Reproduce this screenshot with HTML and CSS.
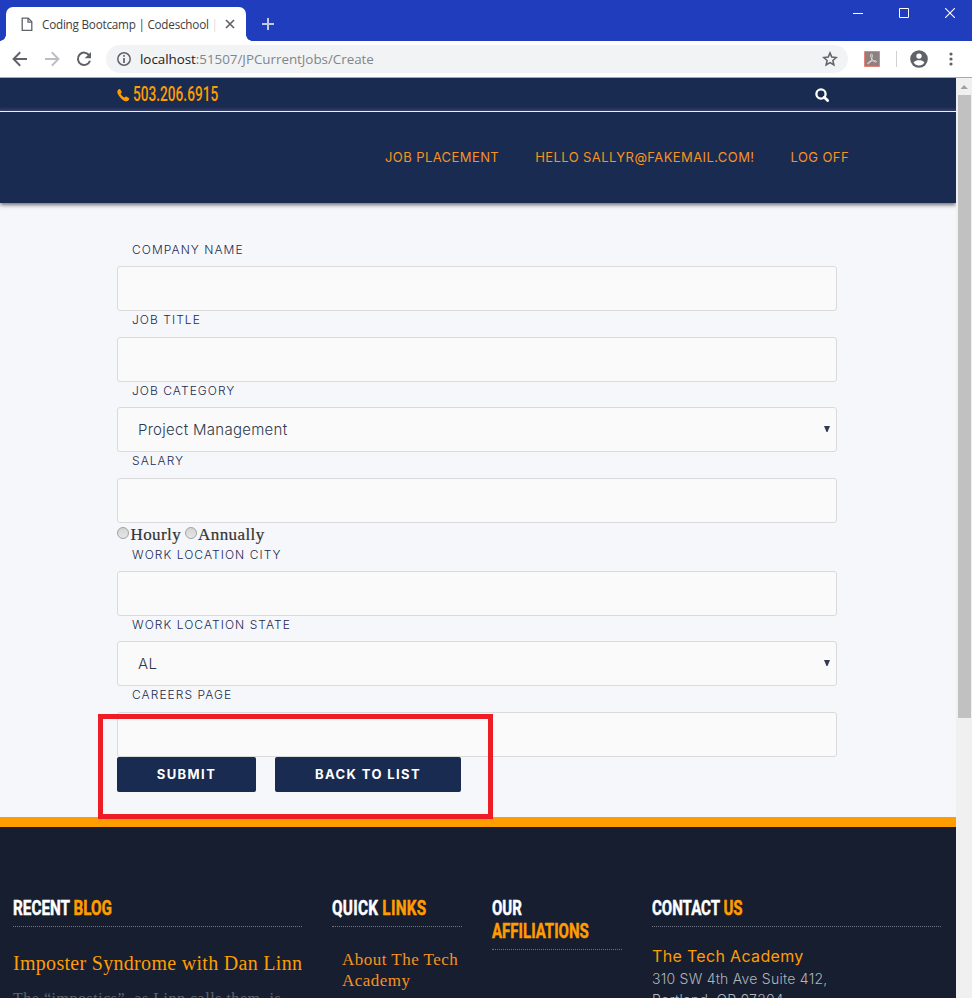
FILE: index.html
```
<!DOCTYPE html>
<html lang="en">
<head>
<meta charset="utf-8">
<title>Coding Bootcamp | Codeschool</title>
<link rel="stylesheet" href="styles.css">
</head>
<body>
<div class="window">
  <div class="titlebar">
    <div class="tab">
      <svg class="tab-file" width="12" height="15" viewBox="0 0 12 15" fill="none" stroke="#5f6368" stroke-width="1.3"><path d="M1.2 1.2h6l3.6 3.6v8.6H1.2z"/><path d="M7 1.2v3.9h3.8"/></svg>
      <span class="tab-title">Coding Bootcamp | Codeschool <i>|</i></span>
      <svg width="10" height="10" viewBox="0 0 10 10" stroke="#5f6368" stroke-width="1.7"><path d="M1 1l8 8M9 1L1 9"/></svg>
    </div>
    <svg class="newtab" width="12" height="12" viewBox="0 0 12 12" stroke="#c3c8da" stroke-width="2"><path d="M6 0v12M0 6h12"/></svg>
    <div class="controls">
      <svg width="10" height="10" viewBox="0 0 10 10" stroke="#fff"><path d="M0 5.5h10"/></svg>
      <svg width="10" height="10" viewBox="0 0 10 10" fill="none" stroke="#fff"><path d="M.5.5h9v9h-9z"/></svg>
      <svg width="10" height="10" viewBox="0 0 10 10" stroke="#fff" stroke-width="1.1"><path d="M0 0l10 10M10 0L0 10"/></svg>
    </div>
  </div>

  <div class="toolbar">
    <svg width="16" height="16" viewBox="0 0 16 16" fill="none" stroke="#5f6368" stroke-width="2"><path d="M8.2 1.3L1.6 8l6.6 6.7M1.8 8H15"/></svg>
    <svg width="16" height="16" viewBox="0 0 16 16" fill="none" stroke="#bcbec1" stroke-width="2"><path d="M7.8 1.3L14.4 8l-6.6 6.7M14.2 8H1"/></svg>
    <svg width="16" height="16" viewBox="0 0 16 16"><path d="M13.3 4.4A6.2 6.2 0 1 0 14 9.8" fill="none" stroke="#5f6368" stroke-width="2"/><path d="M15 .9v6.3H8.7z" fill="#5f6368"/></svg>
    <div class="address">
      <svg width="14" height="14" viewBox="0 0 14 14"><circle cx="7" cy="7" r="6.2" fill="none" stroke="#5f6368" stroke-width="1.5"/><path d="M7 3.1v1.6M7 6v4.9" stroke="#5f6368" stroke-width="1.7"/></svg>
      <span class="url"><b>localhost</b>:51507/JPCurrentJobs/Create</span>
      <svg width="16" height="16" viewBox="0 0 16 16" fill="none" stroke="#5f6368" stroke-width="1.5"><path d="M8 1.9l1.75 4.2 4.55.4-3.45 3 1.05 4.45L8 11.6l-3.9 2.35L5.15 9.5 1.7 6.5l4.55-.4z"/></svg>
    </div>
    <svg width="16" height="16" viewBox="0 0 16 16"><path d="M.5.5h15v15H.5z" fill="#8c8180" stroke="#e98272"/><path d="M7.2 3c1.2-.6 1.3 1.6.9 3.6-.5 2.4-2.2 5.600-3.500 6.200-1.100.4-1.400-.6-.3-1.400 1.800-1.400 6.300-2.200 7.700-1.400 1 .7-.1 1.600-1.400.8C8.800 9.700 7 7.100 6.700 5 6.600 4 6.600 3.300 7.200 3z" fill="none" stroke="#e4dad8"/></svg>
    <span class="divider"></span>
    <svg class="profile" width="18" height="18" viewBox="0 0 18 18"><circle cx="9" cy="9" r="8.800" fill="#5f6368"/><circle cx="9" cy="6.100" r="2.700" fill="#fff"/><path d="M3.600 12.600C4.500 10.800 7 10.300 9 10.300s4.500.5 5.400 2.300C13.300 14.400 11.300 15.500 9 15.500s-4.300-1.100-5.400-2.900z" fill="#fff"/></svg>
    <svg class="menu" width="4" height="14" viewBox="0 0 4 14" fill="#5f6368"><circle cx="2" cy="2" r="1.600"/><circle cx="2" cy="7" r="1.600"/><circle cx="2" cy="12" r="1.600"/></svg>
  </div>

  <div class="viewport">
    <div class="page">
      <div class="topbar">
        <div class="phone">
          <svg width="13" height="13" viewBox="0 0 13 13"><path d="M1 .9C1.900 0 2.900-.1 3.300.5l1.300 2.300c.3.600 0 1.100-.9 1.800-.3.400.4 1.400 1.500 2.500s2 1.700 2.400 1.400c.8-.9 1.300-1.200 1.800-.9l2.400 1.400c.7.500.5 1.500-.4 2.400-1.400 1.400-4 1.100-7.300-2C.6 6-.6 2.600 1 .9z" fill="#ff9d00"/></svg>
          <span>503.206.6915</span>
        </div>
        <svg width="14" height="14" viewBox="0 0 14 14" fill="none" stroke="#fff"><circle cx="6" cy="6" r="4.600" stroke-width="2.300"/><path d="M9.300 9.300l3.300 3.300" stroke-width="2.800" stroke-linecap="round"/></svg>
      </div>
      <nav class="nav"><a>JOB PLACEMENT</a><a>HELLO SALLYR@FAKEMAIL.COM!</a><a>LOG OFF</a></nav>

      <main class="form">
        <label>COMPANY NAME</label>
        <div class="field"></div>
        <label>JOB TITLE</label>
        <div class="field"></div>
        <label>JOB CATEGORY</label>
        <div class="field">Project Management<svg width="6" height="6" viewBox="0 0 6 6"><path d="M0 0h6L3.500 6h-1z" fill="#343a52"/></svg></div>
        <label>SALARY</label>
        <div class="field"></div>
        <div class="radios"><i></i><span>Hourly</span><i></i><span>Annually</span></div>
        <label class="after-radios">WORK LOCATION CITY</label>
        <div class="field"></div>
        <label>WORK LOCATION STATE</label>
        <div class="field">AL<svg width="6" height="6" viewBox="0 0 6 6"><path d="M0 0h6L3.500 6h-1z" fill="#343a52"/></svg></div>
        <label>CAREERS PAGE</label>
        <div class="field"></div>
        <div class="buttons"><button class="submit">SUBMIT</button><button class="back">BACK TO LIST</button></div>
      </main>

      <footer class="footer">
        <section>
          <h3><span>RECENT <em>BLOG</em></span></h3>
          <p class="post">Imposter Syndrome with Dan Linn</p>
          <p class="excerpt">The “impostics”, as Linn calls them, is</p>
        </section>
        <section>
          <h3 class="quick"><span>QUICK <em>LINKS</em></span></h3>
          <p class="link">About The Tech<br>Academy</p>
        </section>
        <section>
          <h3 class="narrow"><span>OUR<br><em>AFFILIATIONS</em></span></h3>
        </section>
        <section>
          <h3 class="narrow"><span>CONTACT <em>US</em></span></h3>
          <p class="org">The Tech Academy</p>
          <p class="street">310 SW 4th Ave Suite 412,<br>Portland, OR 97204</p>
        </section>
      </footer>
      <div class="highlight"></div>
    </div>
    <div class="scrollbar">
      <svg width="16" height="17" viewBox="0 0 16 17"><path d="M4.500 11L8 7l4 4z" fill="#a0a0a0"/></svg>
      <div class="thumb"></div>
    </div>
  </div>
</div>
</body>
</html>
```
FILE: styles.css
```
* { box-sizing: border-box; margin: 0; padding: 0; }
html, body { overflow: hidden; }
svg { display: block; flex: none; }
.window { width: 972px; height: 998px; display: flex; flex-direction: column; overflow: hidden; background: #fff; }

/* Browser chrome */
.titlebar { height: 41px; flex: none; display: flex; background: #203dbd; padding-left: 6px; }
.tab { position: relative; width: 240px; height: 34px; margin-top: 7px; padding: 0 11px 0 15px; display: flex; align-items: center; background: #fff; border-radius: 7px 7px 0 0; }
.tab::before, .tab::after { content: ""; position: absolute; bottom: 0; width: 6px; height: 6px; }
.tab::before { left: -6px; background: radial-gradient(circle at 0 0, transparent 5.5px, #fff 6px); }
.tab::after { right: -6px; background: radial-gradient(circle at 100% 0, transparent 5.5px, #fff 6px); }
.tab-title { flex: 1; margin: -1px 0 0 9px; font: 11.7px "Open Sans", sans-serif; letter-spacing: -0.22px; color: #3c4043; white-space: nowrap; }
.tab-title i { font-style: normal; color: #dcdde0; }
.newtab { margin: 18px 0 0 16px; }
.controls { margin: 8px 17px 0 auto; display: flex; gap: 36px; }
.toolbar { height: 37px; flex: none; display: flex; align-items: center; border-bottom: 1px solid #a8a9ac; padding: 0 12px 0 12px; gap: 16px; }
.address { width: 742px; height: 28px; margin-left: -2px; padding: 0 10px 0 11px; display: flex; align-items: center; border-radius: 14px; background: #f1f3f4; }
.url { flex: 1; margin-left: 9px; font: 13.4px "Open Sans", sans-serif; letter-spacing: -0.03px; color: #80868b; }
.url b { font-weight: 400; color: #202124; }
.divider { width: 1px; height: 16px; background: #cfd1d4; }
.profile { margin-left: -3px; }
.menu { margin-left: 5px; }

/* Page */
.viewport { flex: 1; min-height: 0; display: flex; }
.page { position: relative; width: 956px; overflow: hidden; background: #f6f7fb; }
.topbar { height: 34px; display: flex; justify-content: space-between; align-items: center; padding: 0 127px 0 117px; background: linear-gradient(#192b50 29px, #3a4069 33px, #fff 33px); }
.phone { display: flex; align-items: center; gap: 3px; }
.phone span { width: 85px; margin-top: -1px; font: 500 19.5px/32px Roboto, sans-serif; color: #ff9d00; transform: scaleX(0.7); transform-origin: left; }
.nav { position: relative; height: 91px; display: flex; justify-content: flex-end; align-items: center; gap: 36px; padding: 0 107px 2px 0; background: #192b50; box-shadow: 0 2px 4px rgba(0, 0, 0, 0.55); }
.nav a { font: 13px Inter, sans-serif; letter-spacing: 0.42px; color: #f7931e; }

.form { width: 720px; height: 614px; margin-left: 117px; padding-top: 37.5px; }
.form label { display: block; height: 25.5px; padding-left: 15px; font: 300 12px/17px Inter, sans-serif; letter-spacing: 1.05px; color: #192b50; }
.form .after-radios { padding-top: 1px; }
.field { height: 45px; display: flex; align-items: center; justify-content: space-between; padding: 0 6px 0 20px; border: 1px solid #dadada; border-radius: 3px; background: #fafafa; font: 300 15px Inter, sans-serif; letter-spacing: 0.28px; color: #2e3a4f; }
.field svg { margin-top: -2px; }
.radios { height: 22.5px; padding-top: 2px; display: flex; align-items: center; font: 17px/23px "Liberation Serif", serif; letter-spacing: 0.4px; color: #333; -webkit-text-stroke: 0.2px; }
.radios i { width: 12px; height: 12px; margin: -3px 1.5px 0 0; border: 1px solid #a2a2a2; border-radius: 50%; background: linear-gradient(#d4d4d4, #e6e6e6); }
.radios span { margin-right: 3.5px; }
.buttons { display: flex; gap: 19px; }
.buttons button { height: 35px; border: 0; border-radius: 2px; background: #192b50; color: #fff; font: 700 13px Inter, sans-serif; letter-spacing: 1.4px; }
.buttons .submit { width: 139px; }
.buttons .back { width: 186px; }

.footer { height: 190px; border-top: 10px solid #ff9d00; padding: 70px 15px 0 13px; display: grid; grid-template-columns: 289px 130px 130px 289px; column-gap: 30px; background: #161e30; }
.footer h3 { padding-bottom: 6px; border-bottom: 1px dotted #6d7482; font: 700 21px/23px Roboto, sans-serif; color: #fff; white-space: nowrap; -webkit-text-stroke: 0.5px; }
.footer h3 span { display: block; transform: scaleX(0.728); transform-origin: left; }
.footer h3.quick span { letter-spacing: 0.4px; }
.footer h3.narrow span { transform: scaleX(0.716); }
.footer em { font-style: normal; color: #ff9d00; }
.footer p { white-space: nowrap; }
.post { margin-top: 24px; font: 20px/24px "Liberation Serif", serif; letter-spacing: 0.3px; color: #ff9d00; }
.excerpt { margin-top: 13px; font: 16px/22px "Liberation Serif", serif; letter-spacing: 0.52px; color: #5d6470; }
.link { margin: 22px 0 0 10px; font: 17px/21px "Liberation Serif", serif; letter-spacing: 0.48px; color: #f7931e; }
.org { margin-top: 18px; font: 16px/22px Inter, sans-serif; letter-spacing: 0.33px; color: #ff9d00; }
.street { padding-top: 1px; font: 300 14px/21px Inter, sans-serif; letter-spacing: 0.25px; color: #b1b4ba; }

/* Annotation frame around the form buttons */
.highlight { position: absolute; left: 98px; top: 636px; width: 395px; height: 105px; border: 5px solid #ee1c24; }

.scrollbar { width: 16px; background: #f0f0f0; }
.thumb { width: 13px; height: 623px; margin-left: 2px; background: #c1c1c1; }
```
